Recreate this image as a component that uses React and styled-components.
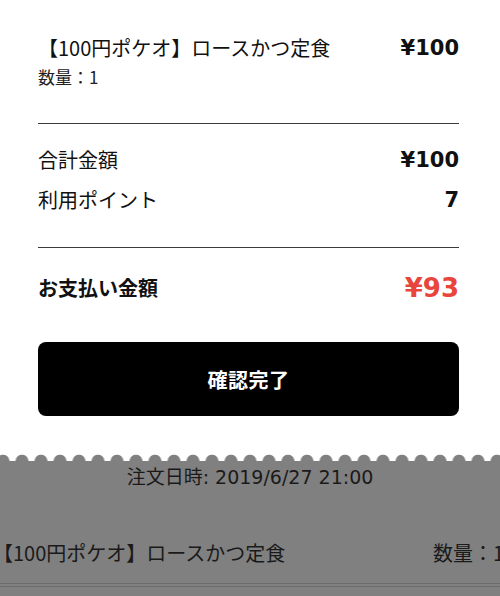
import React from "react";
import styled, { createGlobalStyle } from "styled-components";

const Global = createGlobalStyle`
  html, body { margin: 0; padding: 0; background: #fff; }
  body { font-family: "Noto Sans CJK JP", "Noto Sans", sans-serif; color: #111; }
  #root { height: 100vh; overflow: hidden; }
`;

const Page = styled.div`
  height: 100vh;
  display: flex;
  flex-direction: column;
  overflow: hidden;
`;

const Sheet = styled.section`
  padding: 36px 41px 0 38px;
  background: #fff;
`;

const Row = styled.div`
  display: flex;
  justify-content: space-between;
  align-items: center;
  height: ${(p) => p.$h || 40}px;
  margin-top: ${(p) => p.$mt || 0}px;
`;

const Label = styled.span`
  font-family: "Noto Sans CJK JP", sans-serif;
  font-size: 20px;
  font-weight: ${(p) => (p.$bold ? 700 : 400)};
  line-height: 24px;
  color: #111;
  white-space: nowrap;
`;

const Price = styled.span`
  font-family: "DejaVu Sans", "Noto Sans CJK JP", sans-serif;
  font-size: ${(p) => p.$size || 21}px;
  font-weight: 700;
  color: ${(p) => (p.$red ? "#e8453c" : "#111")};
  line-height: 1;
`;

const Qty = styled.div`
  font-family: "Noto Sans CJK JP", sans-serif;
  font-size: 17px;
  line-height: 22px;
  margin-top: 6px;
  color: #222;
`;

const Divider = styled.hr`
  border: 0;
  border-top: 1px solid #3a3a3a;
  margin: ${(p) => p.$mt}px 0 0 0;
  height: 0;
`;

const Button = styled.button`
  display: flex;
  align-items: center;
  justify-content: center;
  width: 100%;
  height: 74px;
  margin-top: 34px;
  background: #000;
  color: #fff;
  border: 0;
  border-radius: 8px;
  font-family: "Noto Sans CJK JP", sans-serif;
  font-size: 20px;
  font-weight: 700;
  letter-spacing: 0.5px;
  cursor: pointer;
`;

const Scallop = styled.div`
  flex: 0 0 7px;
  margin-top: 38px;
  height: 7px;
  background-image: radial-gradient(circle at 9.5px 7px, #808080 6px, rgba(128,128,128,0) 6.7px);
  background-size: 19px 7px;
  background-position: 12.5px 0;
  background-repeat: repeat-x;
`;

const Under = styled.section`
  flex: 1;
  background: #808080;
  color: #1a1a1a;
  padding-top: 3px;
  overflow: hidden;
`;

const DateLine = styled.div`
  text-align: center;
  font-family: "DejaVu Sans", "Noto Sans CJK JP", sans-serif;
  font-size: 19px;
  line-height: 26px;
`;

const OrderItem = styled.div`
  display: flex;
  align-items: center;
  margin: 50px 0 0 -7px;
  padding-bottom: 17px;
  border-bottom: 4px double #6c6c6c;
  white-space: nowrap;
`;

const OrderName = styled.span`
  font-family: "Noto Sans CJK JP", sans-serif;
  font-size: 20px;
  line-height: 26px;
  flex: 0 0 440px;
`;

const OrderQty = styled.span`
  font-family: "Noto Sans CJK JP", sans-serif;
  font-size: 20px;
  line-height: 26px;
`;

export default function App() {
  return (
    <Page>
      <Global />
      <Sheet>
        <Row $h={24}>
          <Label>【100円ポケオ】ロースかつ定食</Label>
          <Price>¥100</Price>
        </Row>
        <Qty>数量：1</Qty>
        <Divider $mt={35} />
        <Row $mt={16}>
          <Label>合計金額</Label>
          <Price>¥100</Price>
        </Row>
        <Row>
          <Label>利用ポイント</Label>
          <Price>7</Price>
        </Row>
        <Divider $mt={27} />
        <Row $mt={20}>
          <Label $bold>お支払い金額</Label>
          <Price $red $size={26}>¥93</Price>
        </Row>
        <Button>確認完了</Button>
      </Sheet>
      <Scallop />
      <Under>
        <DateLine>注文日時: 2019/6/27 21:00</DateLine>
        <OrderItem>
          <OrderName>【100円ポケオ】ロースかつ定食</OrderName>
          <OrderQty>数量：1</OrderQty>
        </OrderItem>
      </Under>
    </Page>
  );
}
